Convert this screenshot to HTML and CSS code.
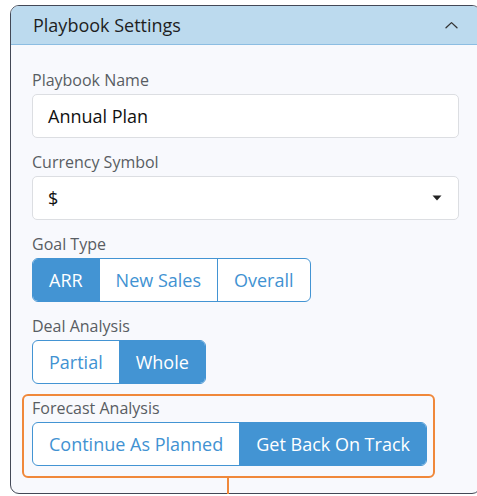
FILE: index.html
```html
<!DOCTYPE html>
<html lang="en">
<head>
<meta charset="utf-8">
<title>Playbook Settings</title>
<link rel="stylesheet" href="styles.css">
</head>
<body>
<section class="panel">
  <header class="panel-head">
    <h2 class="panel-title">Playbook Settings</h2>
    <svg class="chevron" width="13" height="8" viewBox="0 0 13 8" aria-hidden="true">
      <path d="M1 6.8 L6.5 1.6 L12 6.8" fill="none" stroke="#333" stroke-width="1.3" stroke-linecap="round" stroke-linejoin="round"/>
    </svg>
  </header>
  <div class="panel-body">
    <div class="field">
      <label class="field-label">Playbook Name</label>
      <div class="text-input">Annual Plan</div>
    </div>
    <div class="field">
      <label class="field-label">Currency Symbol</label>
      <div class="text-input select">
        <span>$</span>
        <svg class="caret" width="10" height="6" viewBox="0 0 10 6" aria-hidden="true"><path d="M0.5 0.5 H9.5 L5 5.5 Z" fill="#222"/></svg>
      </div>
    </div>
    <div class="field">
      <label class="field-label">Goal Type</label>
      <div class="segmented">
        <span class="seg active">ARR</span>
        <span class="seg">New Sales</span>
        <span class="seg">Overall</span>
      </div>
    </div>
    <div class="field">
      <label class="field-label">Deal Analysis</label>
      <div class="segmented">
        <span class="seg">Partial</span>
        <span class="seg active">Whole</span>
      </div>
    </div>
    <div class="field highlighted">
      <label class="field-label">Forecast Analysis</label>
      <div class="segmented">
        <span class="seg">Continue As Planned</span>
        <span class="seg active">Get Back On Track</span>
      </div>
      <span class="connector"></span>
    </div>
  </div>
</section>
</body>
</html>
```

FILE: styles.css
```css
* { box-sizing: border-box; }

body {
  margin: 0;
  background: #ffffff;
  font-family: "Open Sans", "Noto Sans", sans-serif;
  color: #222;
}

.panel {
  margin: 5px 0 0 10px;
  width: 471px;
  border: 1px solid #434856;
  border-radius: 9px;
  background: #f8f9fd;
}

.panel-head {
  display: flex;
  align-items: center;
  justify-content: space-between;
  height: 39px;
  padding: 0 22px 0 22px;
  background: #bcdaee;
  border-bottom: 1px solid #8cbde2;
  border-radius: 8px 8px 0 0;
}

.panel-title {
  margin: 0;
  font-size: 18px;
  font-weight: 400;
  color: #1e1e1e;
}

.panel-body {
  display: flex;
  flex-direction: column;
  gap: 14px;
  padding: 25px 21px 15px 21px;
}

.field {
  display: flex;
  flex-direction: column;
}

.field-label {
  font-size: 16px;
  line-height: 21px;
  margin-bottom: 3px;
  color: #585d63;
}

.text-input {
  height: 44px;
  display: flex;
  align-items: center;
  justify-content: space-between;
  padding: 0 16px 0 15px;
  background: #ffffff;
  border: 1px solid #dcdee2;
  border-radius: 5px;
  font-size: 18px;
  color: #111;
}

.segmented {
  display: inline-flex;
  align-self: flex-start;
  height: 44px;
  border: 1px solid #4394d3;
  border-radius: 6px;
  overflow: hidden;
  background: #ffffff;
}

.seg {
  display: flex;
  align-items: center;
  padding: 0 16px;
  font-size: 18px;
  color: #4192d2;
}

.seg + .seg { border-left: 1px solid #4394d3; }

.seg.active {
  background: #4394d3;
  color: #ffffff;
}

.highlighted {
  position: relative;
  align-self: flex-start;
  margin: -4px 0 0 -10px;
  padding: 2px 6px 10px 8px;
  border: 2px solid #f0883a;
  border-radius: 6px;
}

.connector {
  position: absolute;
  left: 50%;
  top: 100%;
  width: 2px;
  height: 24px;
  margin-left: -1px;
  background: #f0883a;
}
```
